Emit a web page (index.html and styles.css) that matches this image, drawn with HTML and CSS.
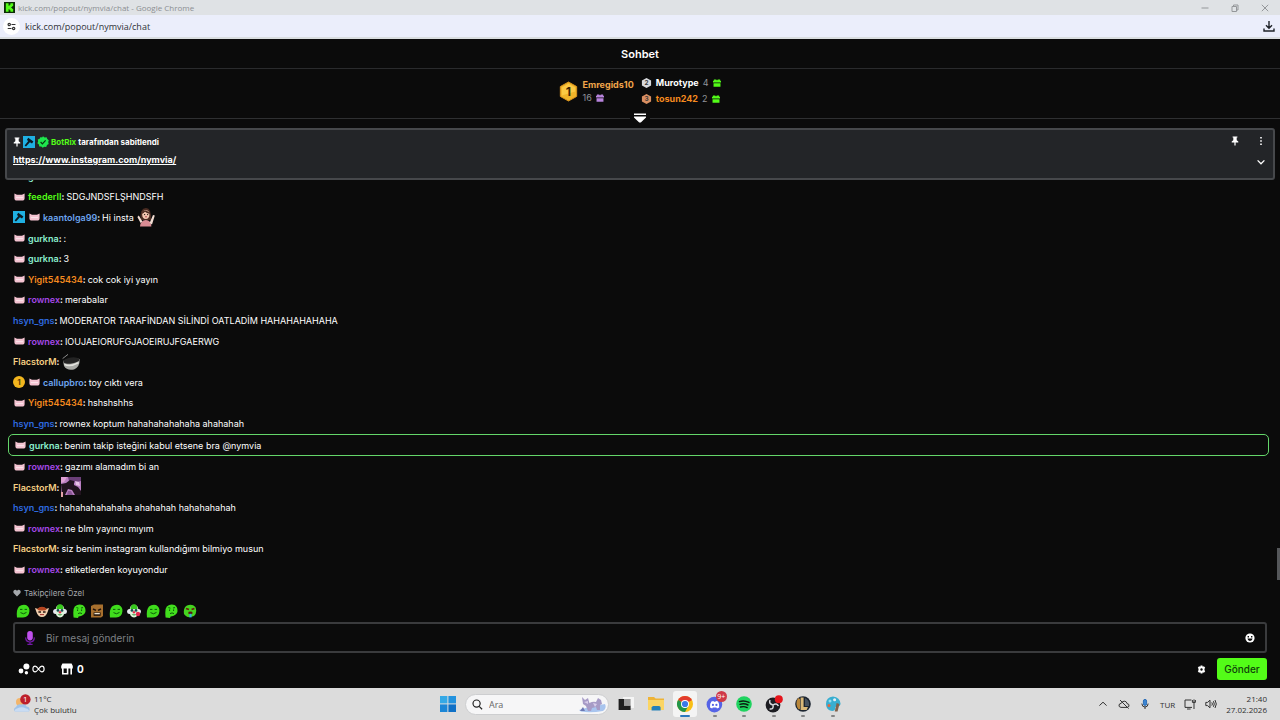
FILE: index.html
```html
<!DOCTYPE html>
<html lang="tr">
  <head>
    <meta charset="UTF-8" />
    <meta name="viewport" content="width=device-width, initial-scale=1.0" />
    <title>kick.com/popout/nymvia/chat</title>
    <link rel="stylesheet" href="styles.css">
  </head>
  <body>
    <!-- Shared icons -->
    <svg class="sprite" aria-hidden="true">
      <symbol id="i-sub" viewBox="0 0 11 8">
        <path d="M0.4 0.4 L3 1.8 H8 L10.6 0.4 V5.6 Q10.4 7.6 9 7.6 H2 Q0.6 7.6 0.4 5.6 Z" fill="#f4c3d1" />
        <path d="M2 4.6 H9" stroke="#fbe6ec" fill="none" />
      </symbol>
      <symbol id="i-mod" viewBox="0 0 12 12">
        <rect width="12" height="12" fill="#1fb0e2" />
        <path d="M5.2 1.8 L10.4 5.6 L9 7.6 L6.9 6.2 L3 10.6 L1.6 9.4 L5.3 5 L3.9 4 Z" fill="#0c1a22" />
      </symbol>
      <symbol id="i-gift" viewBox="0 0 9 9">
        <path d="M1 0.6 H3.6 L4.5 1.6 L5.4 0.6 H8 V2 H9 V4 H0 V2 H1 Z M0.6 4.8 H8.4 V8.8 H0.6 Z" fill="currentColor" />
      </symbol>
      <symbol id="i-pin" viewBox="0 0 8 10">
        <path d="M1.6 0.5 H6.4 V1.6 H5.7 V4.2 L7.3 5.4 V6.5 H4.6 V9.5 H3.4 V6.5 H0.7 V5.4 L2.3 4.2 V1.6 H1.6 Z" fill="#fff" />
      </symbol>
      <symbol id="e-smile" viewBox="0 0 14 14">
        <path d="M1 13.4 Q0 6 3 2.6 Q6 0 10 1 Q14 3 13.4 7.5 Q13 13 7 13.4 Z" fill="#3fdc1c" />
        <path d="M4 5.4 h2.4 M8.6 5.4 h2.4 M4.5 8.6 Q7.5 11 10.5 8.4" stroke="#0d5a0b" fill="none" />
      </symbol>
      <symbol id="e-think" viewBox="0 0 14 14">
        <path d="M1.6 13.6 Q0.6 5 2.8 2.6 Q6 -0.4 10.6 1 Q14 3 13.4 8 Q12 12 6.6 12.4 L6 14 Z" fill="#42df1d" />
        <path d="M4.4 3.6 l2 0.6 M9 4 l2 -0.4 M5.6 5.4 v1.6 M9.6 5.4 v1.6 M6 9.6 q2 -1.4 4 0" stroke="#0d5a0b" fill="none" />
      </symbol>
      <symbol id="e-clown" viewBox="0 0 14 14">
        <circle cx="2.6" cy="7.4" r="2.5" fill="#e9e9f2" />
        <circle cx="11.4" cy="7.4" r="2.5" fill="#e9e9f2" />
        <path d="M2.6 7 Q2.6 0.8 7 0.8 Q11.4 0.8 11.4 7 Q11.4 13.4 7 13.4 Q2.6 13.4 2.6 7 Z" fill="#dff5dc" />
        <path d="M3.4 5 Q4 0 7 0.4 Q10 0 10.6 5 Z" fill="#37c81d" />
        <circle cx="5" cy="6.4" r="1.4" fill="#184a52" />
        <circle cx="9" cy="6.4" r="1.4" fill="#184a52" />
        <circle cx="7" cy="8.2" r="1.2" fill="#e0364f" />
        <path d="M4.6 10.2 Q7 12.6 9.4 10.2 Z" fill="#3d9b45" />
      </symbol>
    </svg>

    <div class="titlebar">
      <svg class="favicon" viewBox="0 0 12 12"><rect width="12" height="12" fill="#0b2b06" /><path d="M2 1.4 H5 V4 H6 V3 H7 V1.4 H10 V4.4 H9 V5.4 H8 V6.6 H9 V7.6 H10 V10.6 H7 V9 H6 V8 H5 V10.6 H2 Z" fill="#53fc18" /></svg>
      <span>kick.com/popout/nymvia/chat - Google Chrome</span>
      <div class="window-controls">
        <button aria-label="Simge durumuna küçült"><svg viewBox="0 0 8 8"><path d="M0.5 4 H7.5" /></svg></button>
        <button aria-label="Önceki boyut"><svg viewBox="0 0 8 8"><path d="M1 2.5 H5.5 V7.5 H1 Z M2.5 2.5 V1 H7 V6 H5.5" /></svg></button>
        <button aria-label="Kapat"><svg viewBox="0 0 8 8"><path d="M0.8 0.8 L7.2 7.2 M7.2 0.8 L0.8 7.2" /></svg></button>
      </div>
    </div>

    <div class="addressbar">
      <span class="site-info"><svg viewBox="0 0 10 10" fill="none" stroke="#333" stroke-width="1.3"><circle cx="2.5" cy="2.8" r="1.3" /><path d="M5 2.8 H9.4 M0.8 7.2 H5" /><circle cx="7.4" cy="7.2" r="1.3" /></svg></span>
      <span class="url">kick.com/popout/nymvia/chat</span>
      <button class="download" aria-label="İndirilenler"><svg viewBox="0 0 12 12" fill="none" stroke="#1f2328" stroke-width="1.4"><path d="M6 1 V8 M3 5.2 L6 8.2 L9 5.2 M1 8.6 V11 H11 V8.6" /></svg></button>
    </div>

    <main class="chat">
      <header class="chat-header"><h1>Sohbet</h1></header>

      <section class="leaderboard">
        <div class="leader first">
          <svg class="medal-lg" viewBox="0 0 20 22">
            <path d="M10 1 L18.6 5.8 V16.2 L10 21 L1.4 16.2 V5.8 Z" fill="#f0b429" stroke="#d9921b" />
            <path d="M10 2.8 L17 6.8 V11 L3 15.2 V6.8 Z" fill="#fbc944" />
            <text x="10" y="15.4" text-anchor="middle">1</text>
          </svg>
          <div>
            <div class="leader-name gold">Emregids10</div>
            <div class="leader-count">16 <svg class="gift purple"><use href="#i-gift" /></svg></div>
          </div>
        </div>
        <div class="runners">
          <div class="leader">
            <svg class="medal" viewBox="0 0 12 12"><path d="M6 0.5 L11 3.2 V8.8 L6 11.5 L1 8.8 V3.2 Z" fill="#d8dadd" /><text x="6" y="8.6" text-anchor="middle">2</text></svg>
            <span class="leader-name">Murotype</span>
            <span class="leader-count">4</span>
            <svg class="gift green"><use href="#i-gift" /></svg>
          </div>
          <div class="leader">
            <svg class="medal" viewBox="0 0 12 12"><path d="M6 0.5 L11 3.2 V8.8 L6 11.5 L1 8.8 V3.2 Z" fill="#d98f62" /><text x="6" y="8.6" text-anchor="middle">3</text></svg>
            <span class="leader-name orange">tosun242</span>
            <span class="leader-count">2</span>
            <svg class="gift green"><use href="#i-gift" /></svg>
          </div>
        </div>
      </section>
      <div class="divider">
        <button aria-label="Sıralamayı aç"><svg viewBox="0 0 12 10" fill="#fff"><path d="M0 0.5 H12 V2 H0 Z M0 3.4 H12 V4.6 L6.8 9.4 H5.2 L0 4.6 Z" /></svg></button>
      </div>

      <div class="feed">
        <aside class="pinned">
          <div class="pinned-body">
            <div class="pinned-by">
              <svg class="pin"><use href="#i-pin" /></svg>
              <svg class="mod"><use href="#i-mod" /></svg>
              <svg class="verified" viewBox="0 0 12 12"><path d="M6 0.3 L7.6 1.4 L9.6 1.2 L10.3 3 L11.8 4.3 L11.2 6.1 L11.7 8 L10 9 L9.2 10.9 L7.3 10.7 L5.7 11.8 L4.3 10.5 L2.3 10.4 L1.9 8.5 L0.4 7.2 L1.1 5.4 L0.8 3.5 L2.6 2.8 L3.6 1.1 L5 1.4 Z" fill="#1ee54d" /><path d="M3.6 6 L5.4 7.8 L8.6 4.4" fill="none" stroke="#08340f" stroke-width="1.2" /></svg>
              <b class="green">BotRix</b> <b>tarafından sabitlendi</b>
            </div>
            <a href="https://www.instagram.com/nymvia/">https://www.instagram.com/nymvia/</a>
          </div>
          <button aria-label="Sabitlemeyi gizle"><svg class="pin"><use href="#i-pin" /></svg></button>
          <div class="pinned-side">
            <button aria-label="Seçenekler"><svg viewBox="0 0 10 10" fill="#fff"><path d="M4.2 1 h1.6 v1.6 h-1.6 Z M4.2 4.2 h1.6 v1.6 h-1.6 Z M4.2 7.4 h1.6 v1.6 h-1.6 Z" /></svg></button>
            <button aria-label="Genişlet"><svg viewBox="0 0 10 10" fill="none" stroke="#fff" stroke-width="1.3"><path d="M1.6 3.4 L5 6.8 L8.4 3.4" /></svg></button>
          </div>
        </aside>

        <ul class="messages">
          <li><svg class="sub"><use href="#i-sub" /></svg><b class="mint">gurkna</b><b>:</b> <span>hahaha</span></li>
          <li><svg class="sub"><use href="#i-sub" /></svg><b class="green">feederII</b><b>:</b> <span>SDGJNDSFLŞHNDSFH</span></li>
          <li><svg class="mod"><use href="#i-mod" /></svg><svg class="sub"><use href="#i-sub" /></svg><b class="sky">kaantolga99</b><b>:</b> <span>Hi insta</span>
            <svg class="emote" viewBox="0 0 20 20"><path d="M4.6 13 Q3.6 1 10 1 Q15.6 1 15 13 Z" fill="#4b2c22" /><ellipse cx="9.8" cy="7.6" rx="3.6" ry="4.4" fill="#f2c7b0" /><path d="M5.6 6 Q8 2.6 11 4 Q13 4.4 14 7 Q10.4 6.4 9 4.8 Q8 6.4 5.6 7 Z" fill="#4b2c22" /><path d="M8 7.6 h1.2 M11 7.6 h1.2" stroke="#2b1a16" /><path d="M9 9.8 h2" stroke="#b3484f" /><path d="M4 19.6 Q4.6 13 9.8 13 Q15 13 15.4 19.6 Z" fill="#d98c94" /><path d="M13.6 16 L17 8 L18.8 8.6 L16 17.6 Z M4.6 16 L1.4 10 L2.8 8.6 L6.4 14.6 Z" fill="#f2dcd2" /></svg></li>
          <li><svg class="sub"><use href="#i-sub" /></svg><b class="mint">gurkna</b><b>:</b> <span>:</span></li>
          <li><svg class="sub"><use href="#i-sub" /></svg><b class="mint">gurkna</b><b>:</b> <span>3</span></li>
          <li><svg class="sub"><use href="#i-sub" /></svg><b class="orange">Yigit545434</b><b>:</b> <span>cok cok iyi yayın</span></li>
          <li><svg class="sub"><use href="#i-sub" /></svg><b class="violet">rownex</b><b>:</b> <span>merabalar</span></li>
          <li><b class="blue">hsyn_gns</b><b>:</b> <span>MODERATOR TARAFİNDAN SİLİNDİ OATLADİM HAHAHAHAHAHA</span></li>
          <li><svg class="sub"><use href="#i-sub" /></svg><b class="violet">rownex</b><b>:</b> <span>IOUJAEIORUFGJAOEIRUJFGAERWG</span></li>
          <li><b class="sand">FlacstorM</b><b>:</b>
            <svg class="emote" viewBox="0 0 20 20"><path d="M2 9 Q9 4.6 18.6 7 Q19 15 13 17.4 Q6 19 3 14 Z" fill="#a9aaa6" /><ellipse cx="10.4" cy="8.6" rx="8.2" ry="3" fill="#232323" transform="rotate(-8 10 9)" /><path d="M3.4 12.4 Q9 15.4 17.6 10.6" stroke="#e4e4df" fill="none" stroke-width="1.6" /><path d="M1.6 6.6 L7 2.4" stroke="#8c8c8c" /></svg></li>
          <li><svg class="rank" viewBox="0 0 12 12"><circle cx="6" cy="6" r="6" fill="#f2b61e" /><text x="6" y="8.8" text-anchor="middle">1</text></svg><svg class="sub"><use href="#i-sub" /></svg><b class="sky">callupbro</b><b>:</b> <span>toy cıktı vera</span></li>
          <li><svg class="sub"><use href="#i-sub" /></svg><b class="orange">Yigit545434</b><b>:</b> <span>hshshshhs</span></li>
          <li><b class="blue">hsyn_gns</b><b>:</b> <span>rownex koptum hahahahahahaha ahahahah</span></li>
          <li class="mention"><svg class="sub"><use href="#i-sub" /></svg><b class="mint">gurkna</b><b>:</b> <span>benim takip isteğini kabul etsene bra @nymvia</span></li>
          <li><svg class="sub"><use href="#i-sub" /></svg><b class="violet">rownex</b><b>:</b> <span>gazımı alamadım bi an</span></li>
          <li><b class="sand">FlacstorM</b><b>:</b>
            <svg class="emote" viewBox="0 0 20 20"><rect width="20" height="18" fill="#b97fc2" /><path d="M7 0 H20 V4 L12 6 L8 4 Z" fill="#6b3f78" /><path d="M0 7 L5 6 L9 3 L13 4 L13 8 L17 10 L20 14 V18 H14 L11 13 L7 12 L4 18 H1 Z" fill="#21131f" /><path d="M14 4 L18 5 L19 9 L15 8 Z" fill="#e9c2e8" /><path d="M0 0 L6 0 L3 5 L0 6 Z" fill="#dfa0d4" /><path d="M7 14 L10 14 L12 18 H6 Z" fill="#8a5896" /><rect y="15" width="2" height="5" fill="#e2a2a8" /></svg></li>
          <li><b class="blue">hsyn_gns</b><b>:</b> <span>hahahahahahaha ahahahah hahahahahah</span></li>
          <li><svg class="sub"><use href="#i-sub" /></svg><b class="violet">rownex</b><b>:</b> <span>ne blm yayıncı mıyım</span></li>
          <li><b class="sand">FlacstorM</b><b>:</b> <span>siz benim instagram kullandığımı bilmiyo musun</span></li>
          <li><svg class="sub"><use href="#i-sub" /></svg><b class="violet">rownex</b><b>:</b> <span>etiketlerden koyuyondur</span></li>
        </ul>
        <div class="scroll-thumb"></div>
      </div>

      <footer class="composer">
        <div class="mode">
          <svg viewBox="0 0 8 8"><path d="M4 7.4 L0.8 4.2 Q-0.2 2.6 0.8 1.4 Q2.4 0 4 1.8 Q5.6 0 7.2 1.4 Q8.2 2.6 7.2 4.2 Z" fill="#a5a8ac" /></svg>
          Takipçilere Özel
        </div>
        <div class="quick-emotes">
          <button aria-label="gülen"><svg><use href="#e-smile" /></svg></button>
          <button aria-label="kızgın"><svg viewBox="0 0 14 14"><path d="M0 4 L3 5 Q7 1 11 5 L14 4 L12.6 8 Q11 13 7 13 Q3 13 1.4 8 Z" fill="#f0cfae" /><path d="M2 5 Q7 0.6 12 5 L10 6.4 H4 Z" fill="#b4441f" /><path d="M3.4 8 h2.6 M8 8 h2.6" stroke="#2b1710" stroke-width="1.6" /><path d="M5 10.6 h4" stroke="#a12f2a" /></svg></button>
          <button aria-label="palyaço"><svg><use href="#e-clown" /></svg></button>
          <button aria-label="düşünen"><svg><use href="#e-think" /></svg></button>
          <button aria-label="kutu"><svg viewBox="0 0 14 14"><path d="M1 2 L4 0.6 H13 V12 L11 13.4 H1 Z" fill="#a8702e" /><path d="M3 5 L6 6.4 M11 5 L8 6.4" stroke="#23130a" stroke-width="1.6" /><rect x="3.6" y="8.4" width="7" height="3.4" fill="#1c0f08" /><path d="M4.4 9.6 h5.4" stroke="#f0e4d0" stroke-width="1.4" /></svg></button>
          <button aria-label="sırıtan"><svg><use href="#e-smile" /></svg></button>
          <button aria-label="kalpli"><svg viewBox="0 0 14 14"><use href="#e-clown" width="14" height="14" /><circle cx="11" cy="10" r="2.2" fill="#e3264d" /></svg></button>
          <button aria-label="mutlu"><svg><use href="#e-smile" /></svg></button>
          <button aria-label="şüpheli"><svg><use href="#e-think" /></svg></button>
          <button aria-label="şaşkın"><svg viewBox="0 0 14 14"><path d="M1 10 Q0 4 4 1.6 Q9 -0.4 12.4 3 Q14.6 9 11 12 Q4 15 1 10 Z" fill="#45d51f" /><path d="M3 4.6 L6 5.6 M11.4 4.4 L8.6 5.6" stroke="#6b1a12" stroke-width="1.6" /><ellipse cx="7.4" cy="9" rx="2.2" ry="1.4" fill="#5c1712" /><path d="M6.4 9.8 h2.2 v3.6 h-2.2 Z" fill="#35b5d8" /></svg></button>
        </div>
        <div class="message-box">
          <svg class="mic" viewBox="0 0 12 16"><rect x="3.2" y="1" width="5.6" height="9.4" rx="2.8" fill="#c050ee" /><path d="M1.6 7.4 Q1.8 12 6 12 Q10.2 12 10.4 7.4 M6 12 V14.4 M3.4 14.4 H8.6" fill="none" stroke="#7419a8" stroke-width="1.2" /></svg>
          <input type="text" aria-label="Mesaj" placeholder="Bir mesaj gönderin" />
          <button aria-label="İfadeler"><svg viewBox="0 0 10 10"><circle cx="5" cy="5" r="4.6" fill="#fff" /><path d="M2.4 5.6 H7.6 Q7.2 8 5 8 Q2.8 8 2.4 5.6 Z M2.6 3 h1.4 v1.4 h-1.4 Z M6 3 h1.4 v1.4 h-1.4 Z" fill="#0b0b0b" /></svg></button>
        </div>
        <div class="actions">
          <button aria-label="Puanlar"><svg class="points" viewBox="0 0 12 12" fill="#fff"><circle cx="8.4" cy="3.6" r="3" /><circle cx="3" cy="8" r="2.4" /><circle cx="8.4" cy="9.8" r="1.7" /></svg><svg class="infinity" viewBox="0 0 14 8" fill="none" stroke="#fff" stroke-width="1.3"><path d="M7 4 Q4.8 1 3.4 1 Q1 1 1 4 Q1 7 3.4 7 Q4.8 7 7 4 Q9.2 1 10.6 1 Q13 1 13 4 Q13 7 10.6 7 Q9.2 7 7 4 Z" /></svg></button>
          <button class="store"><svg viewBox="0 0 12 12" fill="#fff"><path d="M1.4 0.4 H10.6 L11.8 3 V5.4 H0.2 V3 Z M1 5 H2.6 V10 H5.8 V5 H7.4 V11.6 H1 Z M9.4 5 H11 V11.6 H9.4 Z" /></svg>0</button>
          <button class="settings" aria-label="Ayarlar"><svg viewBox="0 0 10 10"><path d="M4 0.6 H6 L6.4 1.9 L7.7 1.3 L9.1 3.1 L8.3 4.2 V5.8 L9.1 6.9 L7.7 8.7 L6.4 8.1 L6 9.4 H4 L3.6 8.1 L2.3 8.7 L0.9 6.9 L1.7 5.8 V4.2 L0.9 3.1 L2.3 1.3 L3.6 1.9 Z" fill="#fff" /><circle cx="5" cy="5" r="1.3" fill="#0b0b0b" /></svg></button>
          <button class="send">Gönder</button>
        </div>
      </footer>
    </main>

    <nav class="taskbar">
      <div class="weather">
        <svg viewBox="0 0 20 20"><circle cx="8" cy="8" r="4" fill="#f3b56a" /><path d="M3 17.6 Q0.6 14.6 4 13 Q5.4 9.4 9.4 10.6 Q13 8.6 14.6 12.4 Q19 13 17 17.6 Z" fill="#9fc3ea" /><path d="M3 17.6 Q2 15.4 5 14.4 Q10 12 14 14.6 Q17 15 17 17.6 Z" fill="#c9dcf3" /><circle cx="13.4" cy="5.4" r="5.2" fill="#bd1f2b" /><text x="13.4" y="8.4" text-anchor="middle">1</text></svg>
        <div>
          <div>11°C</div>
          <div>Çok bulutlu</div>
        </div>
      </div>

      <div class="dock">
        <button aria-label="Başlat"><svg viewBox="0 0 18 18"><path d="M1 1 H8.4 V8.4 H1 Z" fill="#35a9e6" /><path d="M9.4 1 H17 V8.4 H9.4 Z" fill="#2292de" /><path d="M1 9.4 H8.4 V17 H1 Z" fill="#1c86d6" /><path d="M9.4 9.4 H17 V17 H9.4 Z" fill="#0f70c6" /></svg></button>
        <label class="search">
          <svg class="lens" viewBox="0 0 12 12" fill="none" stroke="#222" stroke-width="1.3"><circle cx="5" cy="5" r="3.9" /><path d="M7.8 8 L11 11.2" /></svg>
          <input type="text" placeholder="Ara" aria-label="Ara" />
          <svg class="doodle" viewBox="0 0 30 18"><path d="M2 15 Q15 11 28 9 Q30 13 26 16 Q14 18 4 16.6 Z" fill="#a8c4ee" /><path d="M5 2 L8 5 L11 3 L12.4 8 Q16 6 19 7 L21 3 L24 5 L25 9 L23 10 L23 15 H20 L19 12 L15 13 L14 16 H11 L9 11 L6 9 Z" fill="#a79bc6" /><path d="M7 7 L11 6 L11 9 Z M16 8 L20 9 L18 12 Z" fill="#d8cdea" /><path d="M3 16 L6 12 L8 16 Z" fill="#6d79b4" /></svg>
        </label>
        <div class="apps">
          <button aria-label="Görev görünümü"><svg viewBox="0 0 18 18"><rect x="6" y="2" width="11" height="11" fill="#f5f5f5" /><path d="M1.6 4 H7 V10.6 H13.6 V15 H1.6 Z" fill="#1e1e1e" /><rect x="7" y="4" width="6.6" height="6.6" fill="#9b9b9b" /></svg></button>
          <button aria-label="Dosya Gezgini"><svg viewBox="0 0 18 18"><path d="M1 2 H7 L8.6 3.6 H17 V15 H1 Z" fill="#eeb336" /><path d="M1 5 H17 V15 H1 Z" fill="#fbd563" /><path d="M4.6 15.6 V12.6 Q5 11 6.4 11 H12 Q13.4 11 13.6 12.6 V15.6 Z" fill="#2781b8" /></svg></button>
          <button class="active" aria-label="Chrome"><svg viewBox="0 0 18 18"><circle cx="9" cy="9" r="8" fill="#f9bf15" /><path d="M9 9 L2.07 5 A8 8 0 0 1 15.93 5 Z" fill="#e23b2e" /><path d="M9 9 L2.07 5 A8 8 0 0 0 9 17 L12.4 10.8 Z" fill="#21964a" /><circle cx="9" cy="9" r="4" fill="#fff" /><circle cx="9" cy="9" r="3.1" fill="#3b79e8" /></svg></button>
          <button class="running" aria-label="Discord"><svg viewBox="0 0 18 18"><circle cx="8.4" cy="9.6" r="7.8" fill="#5563e6" /><path d="M4 12.6 Q3.6 8.6 5.4 6.4 L7.4 6 L8 6.8 H9.4 L10 6 L12 6.6 Q13.6 9 13.2 12.6 L11 13.4 L10.4 12.4 H6.8 L6.2 13.4 Z" fill="#fff" /><circle cx="6.9" cy="9.9" r="1.1" fill="#5563e6" /><circle cx="10.4" cy="9.9" r="1.1" fill="#5563e6" /></svg><span class="badge">9+</span></button>
          <button class="running" aria-label="Spotify"><svg viewBox="0 0 18 18"><circle cx="9" cy="9" r="7.8" fill="#1fd35f" /><path d="M4.4 6.6 Q9 5 14 7.4 M5 9.4 Q9 8 13 10 M5.6 12 Q9 11 12.2 12.6" fill="none" stroke="#0c1c11" stroke-width="1.4" stroke-linecap="round" /></svg></button>
          <button class="running" aria-label="OBS"><svg viewBox="0 0 18 18"><circle cx="8" cy="10" r="7.4" fill="#1d1d22" /><path d="M8 10 Q3.6 9 5 5 M8 10 Q9 14.6 4.6 14 M8 10 Q11.6 7.4 13.4 11" fill="none" stroke="#d7d7dc" stroke-width="1.5" /><circle cx="13.8" cy="4.2" r="4" fill="#e5141b" /></svg></button>
          <button class="running" aria-label="League of Legends"><svg viewBox="0 0 18 18"><circle cx="9" cy="9" r="7.8" fill="#1b2430" /><path d="M4 3 Q0.6 9 4.6 14.6 L6 14 V4 Z" fill="#b9873a" /><path d="M6.6 2.6 H9.6 V12 H14 L12.6 15 H6.6 Z" fill="#d9b878" /><path d="M11 3 Q16 5.4 15 11 H11 Z" fill="#46525f" /></svg></button>
          <button class="running" aria-label="Paint"><svg viewBox="0 0 18 18"><path d="M2 9 Q2 2 9 1.4 Q16 2 16.6 9 Q16 12 12 11.4 Q10.6 12 11.4 14 Q10 17 6 15.6 Q2 13.6 2 9 Z" fill="#38aed0" /><circle cx="6" cy="6" r="1.5" fill="#8fdcf0" /><circle cx="10.6" cy="4.8" r="1.5" fill="#e8eef4" /><circle cx="5" cy="10.4" r="1.5" fill="#e3663e" /><path d="M12.6 8 L15.4 9 L13.6 16.6 H10.8 Z" fill="#82614a" /></svg></button>
        </div>
      </div>

      <div class="tray">
        <svg viewBox="0 0 12 12"><path d="M2.4 7.6 L6 4.2 L9.6 7.6" /></svg>
        <svg viewBox="0 0 12 12"><path d="M3 9.4 Q0.6 9 1 7 Q1.4 5.4 3.2 5.4 Q4.2 2.8 6.8 3.2 Q8.8 3.6 9 5.6 Q11.4 5.8 11 8 Q10.6 9.4 9 9.4 Z M2 2 L10.6 10.6" /></svg>
        <svg viewBox="0 0 12 12"><rect x="4.4" y="1.4" width="3.2" height="6" rx="1.6" fill="#3c86d3" stroke="#2a6db8" /><path d="M2.8 5.6 Q3 9 6 9 Q9 9 9.2 5.6 M6 9 V11" /></svg>
        <span class="lang">TUR</span>
        <svg viewBox="0 0 12 12"><path d="M7.4 2 H1 V9.4 H8 M3 11 H6.6 M10 1.4 V11 M8.4 2 V4.4 H11.4 V2" /></svg>
        <svg viewBox="0 0 12 12"><path d="M0.8 4.4 H2.6 L5 2.2 V9.8 L2.6 7.6 H0.8 Z M6.8 4.4 Q8 6 6.8 7.6 M8.4 3.2 Q10.2 6 8.4 8.8 M10 2 Q12.6 6 10 10" /></svg>
        <div class="clock">
          <div>21:40</div>
          <div>27.02.2026</div>
        </div>
      </div>
    </nav>
  </body>
</html>
```

FILE: styles.css
```css
* {
  box-sizing: border-box;
}

body {
  margin: 0;
  height: 100vh;
  display: flex;
  flex-direction: column;
  font-family: "Inter", sans-serif;
  font-size: 9px;
  background: #0b0b0b;
  color: #fff;
  overflow: hidden;
}

button {
  display: flex;
  align-items: center;
  justify-content: center;
  padding: 0;
  border: 0;
  background: none;
  color: inherit;
  font: inherit;
  cursor: pointer;
}

svg {
  display: block;
  flex: none;
}

.sprite {
  position: absolute;
  width: 0;
  height: 0;
}

/* Browser window */
.titlebar {
  height: 15px;
  flex: none;
  display: flex;
  align-items: center;
  gap: 3px;
  padding: 0 11px 0 4px;
  background: #dfe2e5;
  color: #8b8e92;
  font-family: "Open Sans", sans-serif;
  font-size: 8px;
}

.favicon {
  width: 11px;
  height: 11px;
}

.window-controls {
  display: flex;
  gap: 22px;
  margin-left: auto;
}

.window-controls svg {
  width: 8px;
  height: 8px;
  fill: none;
  stroke: #94979a;
}

.addressbar {
  height: 24px;
  flex: none;
  display: flex;
  align-items: center;
  gap: 5px;
  padding: 0 5px 0 3px;
  background: #ebeefb;
  border-bottom: 2px solid #d9dddf;
  color: #303338;
  font-family: "Open Sans", sans-serif;
  font-size: 9px;
}

.site-info {
  width: 17px;
  height: 17px;
  display: grid;
  place-items: center;
  border-radius: 50%;
  background: #fff;
}

.site-info svg {
  width: 9px;
  height: 9px;
}

.download {
  margin-left: auto;
}

.download svg {
  width: 12px;
  height: 12px;
}

/* Chat */
.chat {
  flex: 1;
  min-height: 0;
  display: flex;
  flex-direction: column;
}

.chat-header {
  height: 30px;
  flex: none;
  display: grid;
  place-items: center;
  border-bottom: 1px solid #2a2b2d;
}

.chat-header h1 {
  margin: 0;
  font-size: 11px;
  font-weight: 600;
}

.leaderboard {
  height: 44px;
  flex: none;
  display: flex;
  justify-content: center;
  align-items: center;
  gap: 7px;
}

.leader {
  display: flex;
  align-items: center;
  gap: 4px;
  line-height: 16px;
}

.leader.first {
  line-height: 13px;
}

.leader-name {
  font-weight: 700;
}

.leader-count {
  display: flex;
  align-items: center;
  gap: 4px;
  color: #8f9399;
}

.medal-lg {
  width: 19px;
  height: 21px;
}

.medal-lg text {
  font-size: 13px;
  font-weight: 700;
  fill: #3c2604;
}

.medal {
  width: 11px;
  height: 12px;
}

.medal text {
  font-size: 7px;
  font-weight: 700;
  fill: #3b3b3b;
}

.gift {
  width: 8px;
  height: 8px;
}

.gold {
  color: #f0a54a;
}

.green {
  color: #53fc18;
}

.purple {
  color: #b884dd;
}

.orange {
  color: #f58a1f;
}

.mint {
  color: #8cf0cf;
}

.sky {
  color: #6ba4ef;
}

.violet {
  color: #a548e8;
}

.blue {
  color: #2f6be0;
}

.sand {
  color: #f5cf83;
}

.divider {
  height: 10px;
  flex: none;
  display: flex;
  align-items: center;
  gap: 4px;
}

.divider::before,
.divider::after {
  content: "";
  flex: 1;
  height: 1px;
  background: #2f3032;
}

.divider svg {
  width: 12px;
  height: 10px;
}

.feed {
  position: relative;
  flex: 1;
  min-height: 0;
  display: flex;
  flex-direction: column;
}

/* The pinned message covers the top of the list */
.pinned {
  position: absolute;
  top: 5px;
  left: 5px;
  right: 5px;
  z-index: 1;
  height: 52px;
  display: flex;
  align-items: flex-start;
  gap: 17px;
  padding: 6px 7px 0 6px;
  background: #232528;
  border: 2px solid #46484b;
  border-radius: 3px;
}

.pinned-body {
  flex: 1;
}

.pinned-by {
  display: flex;
  align-items: center;
  gap: 2px;
  height: 12px;
  font-size: 8px;
}

.pinned .pin {
  width: 8px;
  height: 10px;
}

.verified {
  width: 12px;
  height: 12px;
}

.pinned a {
  display: inline-block;
  margin-top: 4px;
  color: #fff;
  font-weight: 700;
  line-height: 16px;
}

.pinned-side {
  display: flex;
  flex-direction: column;
  gap: 11px;
}

.pinned-side svg {
  width: 10px;
  height: 10px;
}

.messages {
  flex: 1;
  min-height: 0;
  display: flex;
  flex-direction: column;
  margin: 0;
  padding: 43px 11px 5px 8px;
  list-style: none;
  font-weight: 400;
}

.messages li {
  flex: 1 1 0;
  min-height: 0;
  display: flex;
  align-items: center;
  padding: 0 5px;
}

.messages li span,
.messages li .emote {
  margin-left: 2px;
}

.messages b {
  font-weight: 600;
}

.messages .mention {
  border: 1px solid #64d66a;
  border-radius: 5px;
}

.sub {
  width: 11px;
  height: 8px;
  margin: 0 3px 0 1px;
}

.mod,
.rank {
  width: 12px;
  height: 12px;
}

.messages .mod,
.messages .rank {
  margin-right: 3px;
}

.rank text {
  font-size: 8px;
  font-weight: 700;
  fill: #5b3a05;
}

.emote {
  width: 20px;
  height: 20px;
}

.scroll-thumb {
  position: absolute;
  right: 0;
  bottom: 5px;
  width: 3px;
  height: 32px;
  background: #55575a;
}

/* Message composer */
.composer {
  flex: none;
  padding: 0 13px;
}

.mode {
  display: flex;
  align-items: center;
  gap: 3px;
  height: 16px;
  color: #a5a8ac;
  font-size: 8px;
}

.mode svg {
  width: 8px;
  height: 8px;
}

.quick-emotes {
  width: 184px;
  height: 21px;
  display: flex;
  align-items: center;
  justify-content: space-between;
  padding: 0 0 2px 3px;
}

.quick-emotes svg {
  width: 14px;
  height: 14px;
}

.message-box {
  height: 31px;
  display: flex;
  align-items: center;
  gap: 10px;
  padding: 0 10px 0 9px;
  border: 2px solid #3a3b3d;
  border-radius: 3px;
}

.message-box input {
  flex: 1;
  min-width: 0;
  padding: 0;
  border: 0;
  outline: 0;
  background: none;
  color: #fff;
  font: inherit;
  font-size: 10px;
}

.message-box input::placeholder {
  color: #7e8185;
  opacity: 1;
}

.mic {
  width: 12px;
  height: 16px;
}

.message-box button svg {
  width: 10px;
  height: 10px;
}

.actions {
  height: 35px;
  display: flex;
  align-items: center;
  padding: 0 0 3px 5px;
}

.points {
  width: 12px;
  height: 12px;
  margin-right: 2px;
}

.infinity {
  width: 13px;
  height: 8px;
}

.store {
  gap: 4px;
  margin-left: 16px;
  font-size: 10px;
  font-weight: 700;
}

.store svg {
  width: 12px;
  height: 12px;
}

.settings {
  margin-left: auto;
}

.settings svg {
  width: 9px;
  height: 9px;
}

.send {
  width: 50px;
  height: 22px;
  margin-left: 11px;
  background: #53fc18;
  border-radius: 3px;
  color: #10400a;
  font-size: 10px;
  font-weight: 500;
}

/* Windows taskbar */
.taskbar {
  height: 32px;
  flex: none;
  display: grid;
  grid-template-columns: 1fr auto 1fr;
  align-items: center;
  padding: 0 13px 0 12px;
  background: #dcdcdc;
  color: #2f2f2f;
  font-family: "Open Sans", sans-serif;
  font-size: 8px;
  line-height: 11px;
}

.weather {
  display: flex;
  align-items: center;
  gap: 2px;
}

.weather svg {
  width: 20px;
  height: 20px;
}

.weather text {
  font-size: 8px;
  fill: #fff;
}

.dock {
  display: flex;
  align-items: center;
  padding-left: 5px;
}

.dock svg {
  width: 18px;
  height: 18px;
}

.search {
  width: 144px;
  height: 21px;
  display: flex;
  align-items: center;
  gap: 6px;
  margin: 0 5px 0 8px;
  padding: 0 1px 0 6px;
  background: #f6f6f7;
  border: 1px solid #cdced0;
  border-radius: 11px;
}

.search input {
  flex: 1;
  min-width: 0;
  padding: 0;
  border: 0;
  outline: 0;
  background: none;
  font: inherit;
  font-size: 9px;
}

.search input::placeholder {
  color: #666;
  opacity: 1;
}

.search .lens {
  width: 11px;
  height: 11px;
}

.search .doodle {
  width: 30px;
  height: 18px;
}

.apps {
  width: 231px;
  display: flex;
  justify-content: space-between;
}

.apps button {
  position: relative;
  width: 24px;
  height: 26px;
  border-radius: 3px;
}

.apps .active {
  background: #f4f4f4;
}

.apps .running::after,
.apps .active::after {
  content: "";
  position: absolute;
  bottom: 0;
  width: 4px;
  height: 2px;
  border-radius: 1px;
  background: #858585;
}

.apps .active::after {
  width: 10px;
  background: #2b78bd;
}

.badge {
  position: absolute;
  top: 0;
  right: 0;
  width: 11px;
  height: 11px;
  border-radius: 50%;
  background: #cf3a48;
  color: #fff;
  font-size: 7px;
  line-height: 11px;
}

.tray {
  display: flex;
  align-items: center;
  justify-content: flex-end;
  gap: 9px;
}

.tray svg {
  width: 12px;
  height: 12px;
  fill: none;
  stroke: #333;
}

.clock {
  text-align: right;
}
```
